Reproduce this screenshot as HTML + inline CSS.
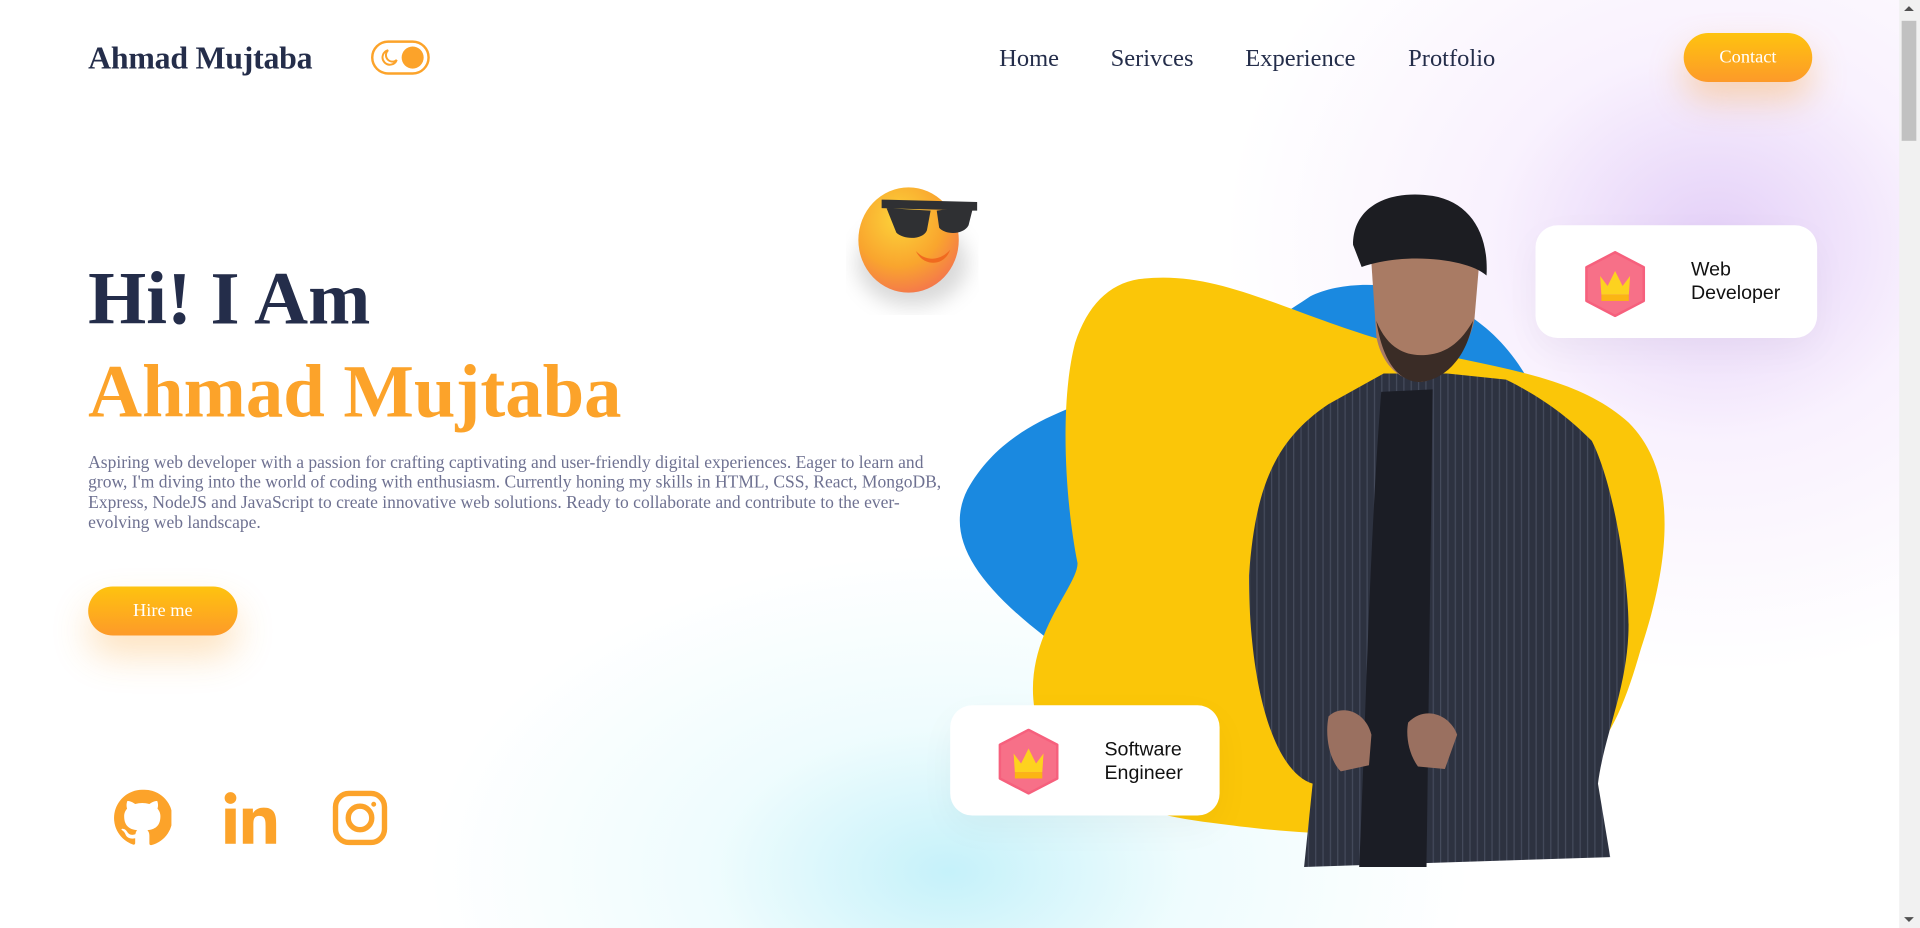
<!DOCTYPE html>
<html><head><meta charset="utf-8"><style>
html,body{margin:0;padding:0;width:1920px;height:928px;overflow:hidden;background:#fff}
#s{position:absolute;left:0;top:0;width:1568px;height:758px;transform:scale(1.22449);transform-origin:0 0;font-family:"Liberation Serif",serif;overflow:hidden;background:#fff}
.a{position:absolute}
.logo{left:72px;top:33px;font-size:26px;font-weight:bold;color:#242d4a;letter-spacing:-0.2px}
.nav{top:37px;font-size:20px;color:#242d4a}
.btn{background:linear-gradient(#fec30f,#fd9a29);color:#fff;border-radius:22px;text-align:center;box-shadow:0 14px 28px rgba(253,160,40,.35)}
h1{margin:0;font-size:61px;font-weight:bold;line-height:1}
.card{background:#fff;border-radius:18px;box-shadow:0 10px 30px rgba(0,0,0,.04);font-family:"Liberation Sans",sans-serif;font-size:16px;color:#111;line-height:19px}
</style></head><body><div id="s">
<div class="a" style="left:960px;top:-150px;width:800px;height:700px;background:radial-gradient(ellipse 50% 50% at 55% 50%,rgba(200,160,240,.5),rgba(230,200,250,.25) 45%,rgba(255,255,255,0) 100%)"></div>
<div class="a" style="left:350px;top:400px;width:850px;height:520px;background:radial-gradient(ellipse 50% 50% at 50% 60%,rgba(150,230,245,.55),rgba(200,245,250,.3) 45%,rgba(255,255,255,0) 100%)"></div>
<div class="a logo">Ahmad Mujtaba</div>
<div class="a" style="left:303px;top:33px;width:44px;height:24px;border:2.5px solid #fca32a;border-radius:14px"><div class="a" style="right:3px;top:3px;width:18px;height:18px;border-radius:50%;background:#fca32a"></div><svg class="a" style="left:5px;top:4px" width="16" height="16" viewBox="0 0 16 16"><path d="M7 2 A6 6 0 1 0 14 10 A5 5 0 0 1 7 2Z" fill="none" stroke="#fca32a" stroke-width="1.6"/></svg></div>
<div class="a nav" style="left:816px">Home</div>
<div class="a nav" style="left:907px">Serivces</div>
<div class="a nav" style="left:1017px">Experience</div>
<div class="a nav" style="left:1150px">Protfolio</div>
<div class="a btn" style="left:1375px;top:27px;width:105px;height:40px;line-height:40px;font-size:15px;border-radius:20px">Contact</div>
<h1 class="a" style="left:72px;top:214px;color:#242d4a">Hi! I Am</h1>
<h1 class="a" style="left:72px;top:290px;color:#fca32a">Ahmad Mujtaba</h1>
<div class="a" style="left:72px;top:370px;width:705px;font-size:14.3px;line-height:16.3px;color:#6e7191">Aspiring web developer with a passion for crafting captivating and user-friendly digital experiences. Eager to learn and grow, I'm diving into the world of coding with enthusiasm. Currently honing my skills in HTML, CSS, React, MongoDB, Express, NodeJS and JavaScript to create innovative web solutions. Ready to collaborate and contribute to the ever-evolving web landscape.</div>
<div class="a btn" style="left:72px;top:479px;width:122px;height:40px;line-height:40px;font-size:15px;box-shadow:0 16px 30px rgba(253,160,40,.3)">Hire me</div>
<svg class="a" style="left:92px;top:644px" width="48" height="48" viewBox="0 0 24 24"><path fill="#fca32a" d="M12 .5A11.5 11.5 0 0 0 8.4 22.9c.6.1.8-.3.8-.6v-2c-3.2.7-3.9-1.5-3.9-1.5-.5-1.3-1.3-1.7-1.3-1.7-1-.7.1-.7.1-.7 1.2.1 1.8 1.2 1.8 1.2 1 1.8 2.7 1.3 3.4 1 .1-.8.4-1.3.7-1.6-2.6-.3-5.3-1.3-5.3-5.7 0-1.3.5-2.3 1.2-3.1-.1-.3-.5-1.5.1-3.1 0 0 1-.3 3.2 1.2a11 11 0 0 1 5.8 0c2.2-1.5 3.2-1.2 3.2-1.2.6 1.6.2 2.8.1 3.1.7.8 1.2 1.8 1.2 3.1 0 4.4-2.7 5.4-5.3 5.7.4.4.8 1.1.8 2.2v3.3c0 .3.2.7.8.6A11.5 11.5 0 0 0 12 .5z"/></svg>
<svg class="a" style="left:182px;top:645px" width="46" height="46" viewBox="0 0 24 24"><rect x="1" y="8" width="4.5" height="15" fill="#fca32a"/><circle cx="3.25" cy="3.5" r="2.5" fill="#fca32a"/><path fill="#fca32a" d="M8.5 8h4.3v2c.7-1.3 2.3-2.4 4.6-2.4 4.5 0 5.3 2.9 5.3 6.7V23h-4.5v-7.7c0-1.8 0-4.2-2.6-4.2S13 13.1 13 15.2V23H8.5z"/></svg>
<svg class="a" style="left:270px;top:644px" width="48" height="48" viewBox="0 0 24 24" fill="none" stroke="#fca32a" stroke-width="2.2"><rect x="2" y="2" width="20" height="20" rx="5.5"/><circle cx="12" cy="12" r="4.8"/><circle cx="17.6" cy="6.4" r="1" fill="#fca32a" stroke="none"/></svg>
<svg class="a" style="left:0;top:0" width="1568" height="758" viewBox="0 0 1568 758">
<defs><radialGradient id="em" cx="40%" cy="30%" r="75%"><stop offset="0" stop-color="#fcd43a"/><stop offset=".6" stop-color="#f9a52e"/><stop offset="1" stop-color="#f4744d"/></radialGradient>
<filter id="sh"><feGaussianBlur stdDeviation="8"/></filter>
<pattern id="pin" width="6" height="6" patternUnits="userSpaceOnUse"><rect width="6" height="6" fill="#2d3240"/><rect width="1" height="6" fill="#454b5c"/></pattern></defs>
<ellipse cx="745" cy="215" rx="45" ry="35" fill="rgba(0,0,0,.15)" filter="url(#sh)"/>
<ellipse cx="742" cy="196" rx="41" ry="43" fill="url(#em)"/>
<path d="M724 170 L760 172 L757 188 C754 196 738 196 732 190 Z M765 172 L795 168 L791 184 C787 192 772 192 767 186Z M720 163 L798 165 L798 172 L720 170Z" fill="#2f3033"/>
<path d="M748 205 C756 214 768 213 776 204 C771 218 754 218 748 205Z" fill="#f06a1f"/>
<path d="M1070 242 C1110 222 1200 230 1245 305 L1120 530 L860 525 C800 480 770 440 790 400 C815 355 860 335 920 318 C990 295 1040 262 1070 242Z" fill="#1a89e0"/>
<path d="M930 228 C990 220 1040 250 1120 275 C1200 300 1280 300 1330 345 C1375 390 1360 470 1340 530 C1320 600 1300 640 1220 665 C1140 690 1050 680 990 672 C920 664 860 640 845 580 C835 520 880 480 880 460 C870 410 865 330 878 280 C888 250 905 232 930 228Z" fill="#fbc608"/>
<path d="M1130 305 L1085 330 C1040 360 1025 400 1020 470 C1020 560 1040 630 1072 640 L1065 708 L1315 700 L1305 640 C1310 600 1330 560 1330 510 C1330 480 1320 400 1300 360 C1280 340 1260 325 1230 310 L1182 305Z" fill="url(#pin)"/>
<path d="M1120 215 C1122 195 1200 195 1208 215 L1204 262 C1196 295 1176 310 1160 312 C1140 310 1128 295 1124 275Z" fill="#a97b64"/>
<path d="M1124 262 C1130 300 1145 312 1160 312 C1180 310 1198 292 1203 262 C1190 285 1175 290 1160 290 C1145 290 1132 282 1124 262Z" fill="#3a2c26"/>
<path d="M1105 200 C1105 165 1140 155 1170 160 C1200 165 1216 190 1214 225 C1200 212 1150 205 1112 218Z" fill="#1c1d22"/>
<path d="M1128 320 L1170 318 L1165 708 L1110 708 C1115 600 1118 450 1128 320Z" fill="#1b1d25"/>
<path d="M1085 585 C1095 575 1115 580 1120 600 L1118 625 L1095 630 C1085 620 1082 600 1085 585Z M1150 590 C1165 575 1185 585 1190 600 L1180 628 L1158 626 C1150 615 1148 600 1150 590Z" fill="#9a7060"/>
</svg>
<div class="a card" style="left:1254px;top:184px;width:230px;height:92px"><div class="a" style="left:127px;top:27px">Web<br>Developer</div></div>
<svg class="a" style="left:1294px;top:205px" width="50" height="54" viewBox="0 0 48 53"><path d="M24 1 L47 13 L47 40 L24 52 L1 40 L1 13Z" fill="#f77088" stroke="#f6607d" stroke-linejoin="round" stroke-width="2"/><path d="M12 20 L18 28 L24 16 L30 28 L36 20 L35 35 L13 35Z" fill="#fdd21f"/><rect x="13" y="35" width="22" height="5" fill="#fbb514"/></svg>
<div class="a card" style="left:776px;top:576px;width:220px;height:90px"><div class="a" style="left:126px;top:27px">Software<br>Engineer</div></div>
<svg class="a" style="left:815px;top:595px" width="50" height="54" viewBox="0 0 48 53"><path d="M24 1 L47 13 L47 40 L24 52 L1 40 L1 13Z" fill="#f77088" stroke="#f6607d" stroke-linejoin="round" stroke-width="2"/><path d="M12 20 L18 28 L24 16 L30 28 L36 20 L35 35 L13 35Z" fill="#fdd21f"/><rect x="13" y="35" width="22" height="5" fill="#fbb514"/></svg>
<div class="a" style="left:1551px;top:0;width:17px;height:758px;background:#f1f1f1"><div class="a" style="left:2px;top:17px;width:12px;height:98px;background:#c1c1c1"></div><div class="a" style="left:4px;top:5px;width:0;height:0;border:4px solid transparent;border-bottom-color:#505050;border-top:0"></div><div class="a" style="left:4px;bottom:5px;width:0;height:0;border:4px solid transparent;border-top-color:#505050;border-bottom:0"></div></div>
</div></body></html>
